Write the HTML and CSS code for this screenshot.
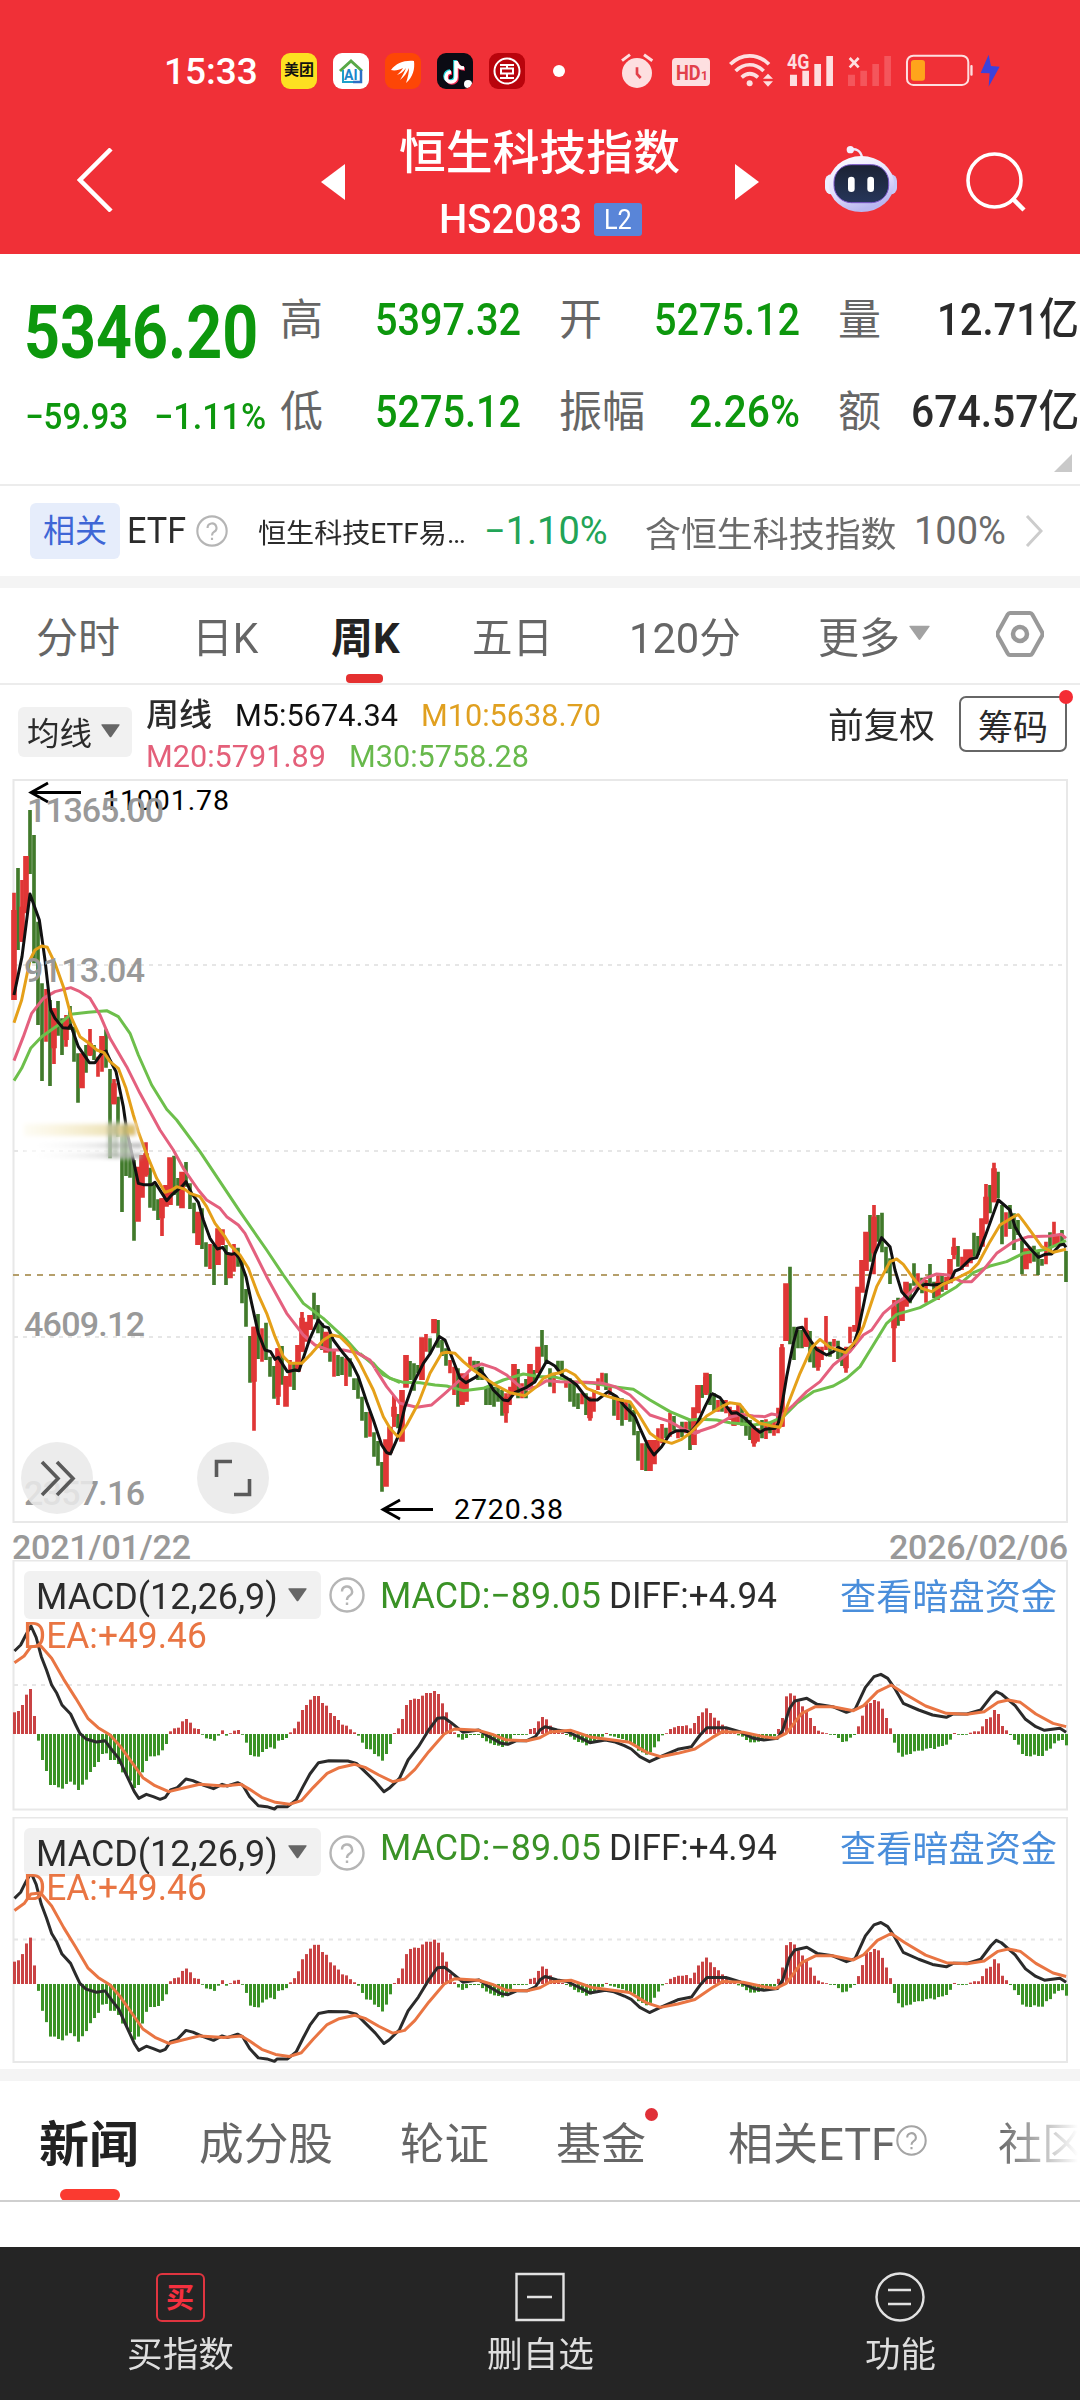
FILE: index.html
```html
<!DOCTYPE html>
<html lang="zh-CN">
<head>
<meta charset="utf-8">
<title>恒生科技指数</title>
<link rel="stylesheet" href="styles.css">
</head>
<body>
<svg class="defs" aria-hidden="true">
  <symbol id="help" viewBox="0 0 36 36"><circle cx="18" cy="18" r="16.5" fill="none" stroke="currentColor" stroke-width="2.4"/><path d="M13 14.5a5 5 0 1 1 7.5 4.3c-1.8 1.1-2.5 1.9-2.5 4.2M18 25.5v2.6" fill="none" stroke="currentColor" stroke-width="2.4"/></symbol>
  <symbol id="down" viewBox="0 0 20 14"><path d="M1 0h18q1.200 0 .5 1L11 13q-1 1.300-2 0L.5 1Q-.2 0 1 0z" fill="currentColor"/></symbol>
</svg>

<header class="header">
  <div class="status">
    <span class="time" data-w="94">15:33</span>
    <div class="apps">
      <span class="app app-mt">美团</span>
      <span class="app app-ai"><svg viewBox="0 0 36 36"><path d="M7 18 18 8l11 10" fill="none" stroke="#58a846" stroke-width="3"/><path d="M10 17v12h18" fill="none" stroke="#1c9fc9" stroke-width="2"/><path d="M28 17v12l-8 0" fill="none" stroke="#2d6fc4" stroke-width="2.500"/></svg><i>AI</i></span>
      <span class="app app-or"><svg viewBox="0 0 36 36"><path d="M6 17C11 10 20 7 29 8c1 8-1 16-8 22 2-6 3-11 3-15-2 5-5 9-9 12 3-5 5-9 6-12-3 4-6 6-9 7 3-3 5-5 6-7-4 2-8 3-12 2z" fill="#fff"/></svg></span>
      <span class="app app-tt"><svg viewBox="0 0 36 36"><g fill="none" stroke-width="3.600"><path d="M18 7v16a5 5 0 1 1-5-5M18 8c1 5 4 7 8 7" stroke="#24d9e0"/><path d="M20 9v16a5 5 0 1 1-5-5M20 9c1 5 4 7 8 7" stroke="#f8305a"/><path d="M19 8v16a5 5 0 1 1-5-5M19 8c1 5 4 7 8 7" stroke="#fff"/></g><circle cx="31" cy="31" r="4" fill="#fff"/></svg></span>
      <span class="app app-ic"><svg viewBox="0 0 36 36"><g fill="none" stroke="#fff" stroke-width="2"><circle cx="18" cy="18" r="12.500"/><path d="M11 12h14M11 25h14M12 15.500h12v5H12zM18 12v4M18 20v5"/></g></svg></span>
    </div>
    <i class="dot"></i>
    <svg class="sysicons" viewBox="60 30 1150 120">
      <g fill="#fddfe0">
        <circle cx="111" cy="99" r="45"/><path d="M66 62 90 44M132 44l25 18" stroke="#fddfe0" stroke-width="9"/>
        <rect x="216" y="54" width="114" height="84" rx="12"/>
        <circle cx="449" cy="130" r="9"/><path d="m504 101 15 15h-30zM504 140l15-16h-30z"/>
        <path d="M570 104h21v34h-21zM607 92h20v46h-20zM643 72h20v66h-20zM679 48h20v90h-20z"/>
        <rect x="1111" y="75" width="7" height="32" rx="3"/>
      </g>
      <path d="M111 82v20l11 12" fill="none" stroke="#e2404a" stroke-width="8"/>
      <g fill="none" stroke="#fddfe0" stroke-width="11"><path d="M391 73c33-34 83-34 116 0M407 93c25-25 59-25 84 0M425 112c16-14 33-14 49 0"/></g>
      <path d="M744 104h21v34h-21zM781 92h20v46h-20zM817 72h20v66h-20zM853 48h20v90h-20z" fill="#f4565c"/>
      <path d="m749 54 27 28M776 54l-27 28" stroke="#fddfe0" stroke-width="8"/>
      <rect x="921" y="47" width="184" height="88" rx="19" fill="none" stroke="#fddfe0" stroke-width="6"/>
      <rect x="933" y="60" width="42" height="62" rx="9" fill="#ffa41b"/>
      <path d="m1166 44-24 55 27 1-3 40 33-60-26-2z" fill="#3c42dc"/>
      <text x="228" y="121" class="hd" textLength="74" lengthAdjust="spacingAndGlyphs">HD</text><text x="303" y="121" class="hd1">1</text>
      <text x="561" y="88" class="g4" textLength="67" lengthAdjust="spacingAndGlyphs">4G</text>
    </svg>
  </div>
  <div class="titlebar">
    <svg class="back" viewBox="0 0 36 64"><path d="M34 1 3 32l31 31" fill="none" stroke="#fff" stroke-width="4.500"/></svg>
    <svg class="prev" viewBox="0 0 24 36"><path d="M0 18 24 0v36z" fill="#fff"/></svg>
    <div class="title">
      <h1 data-w="281">恒生科技指数</h1>
      <div class="code"><span data-w="143">HS2083</span><b data-w="28">L2</b></div>
    </div>
    <svg class="next" viewBox="0 0 24 36"><path d="M24 18 0 0v36z" fill="#fff"/></svg>
    <svg class="robot" viewBox="672 315 222 206">
      <defs><linearGradient id="rb" x2=".4" y2="1"><stop offset="0" stop-color="#fff"/><stop offset=".6" stop-color="#e4e1fc"/><stop offset="1" stop-color="#b9b6f0"/></linearGradient><linearGradient id="rf" x2="0" y2="1"><stop stop-color="#1b2233"/><stop offset="1" stop-color="#26365a"/></linearGradient></defs>
      <path d="M750 330c16-6 32 0 36 22" fill="none" stroke="#efeafd" stroke-width="7"/><circle cx="751" cy="329" r="11" fill="#f4f0ff"/>
      <rect x="675" y="403" width="40" height="60" rx="19" fill="#eef"/><rect x="851" y="403" width="40" height="60" rx="19" fill="#c6caf7"/>
      <ellipse cx="784" cy="432" rx="98" ry="84" fill="url(#rb)"/>
      <rect x="702" y="374" width="164" height="114" rx="52" fill="url(#rf)" stroke="#7a55c8" stroke-width="3"/>
      <rect x="744" y="410" width="20" height="46" rx="10" fill="#fff"/><rect x="802" y="410" width="20" height="46" rx="10" fill="#fff"/>
    </svg>
    <svg class="search" viewBox="0 0 60 60"><circle cx="28.500" cy="28.500" r="26.500" fill="none" stroke="#fff" stroke-width="3.600"/><path d="M46 46l12 12" stroke="#fff" stroke-width="4.500"/></svg>
  </div>
</header>

<section class="quote">
  <div class="last">
    <div class="price" data-w="234">5346.20</div>
    <div class="change"><span data-w="103">−59.93</span><span data-w="112">−1.11%</span></div>
  </div>
  <dl class="stats">
    <div><dt>高</dt><dd data-w="146">5397.32</dd></div>
    <div><dt>开</dt><dd data-w="146">5275.12</dd></div>
    <div class="dark"><dt>量</dt><dd data-w="142">12.71亿</dd></div>
    <div><dt>低</dt><dd data-w="146">5275.12</dd></div>
    <div><dt>振幅</dt><dd data-w="111">2.26%</dd></div>
    <div class="dark"><dt>额</dt><dd data-w="168">674.57亿</dd></div>
  </dl>
  <i class="corner"></i>
</section>

<section class="related">
  <span class="tag">相关</span>
  <span class="etf" data-w="59">ETF</span>
  <svg class="q"><use href="#help"/></svg>
  <span class="name" data-w="208">恒生科技ETF易…</span>
  <span class="pct" data-w="124">−1.10%</span>
  <span class="hold" data-w="252">含恒生科技指数</span>
  <span class="full" data-w="92">100%</span>
  <svg class="more" viewBox="0 0 18 32"><path d="M2 1l14 15L2 31" fill="none" stroke="#ccc" stroke-width="3"/></svg>
</section>

<nav class="periods">
  <a data-w="84">分时</a><a data-w="66">日K</a><a class="on" data-w="69">周K</a><a data-w="81">五日</a><a data-w="112">120分</a><a data-w="82">更多</a>
  <svg class="tri"><use href="#down"/></svg>
  <svg class="hex" viewBox="0 0 48 48"><path d="M14 3h20q1.500 0 2.300 1.500L46 22q1 2 0 4L36.300 43.500Q35.500 45 34 45H14q-1.500 0-2.300-1.500L2 26q-1-2 0-4L11.700 4.500Q12.500 3 14 3z" fill="none" stroke="#999" stroke-width="4"/><circle cx="24" cy="24" r="7" fill="none" stroke="#999" stroke-width="4.500"/></svg>
</nav>

<section class="mabar">
  <button class="drop"><span data-w="65">均线</span><svg><use href="#down"/></svg></button>
  <div class="mas">
    <p><span class="c0" data-w="66">周线</span><span class="c5" data-w="163">M5:5674.34</span><span class="c10" data-w="180">M10:5638.70</span></p>
    <p><span class="c20" data-w="180">M20:5791.89</span><span class="c30" data-w="180">M30:5758.28</span></p>
  </div>
  <span class="fq" data-w="107">前复权</span>
  <button class="chip"><span data-w="70">筹码</span></button>
</section>

<section class="kline">
<svg viewBox="0 0 1080 790">
  <rect x="13.500" y="10" width="1053.500" height="742" class="frame"/>
  <path d="M14 195H1066M14 381H1066M14 567H1066" class="grid"/>
  <path d="M13 505H1066" stroke="#b59f6b" stroke-width="2" stroke-dasharray="6 6"/>
  <g transform="scale(.33333)" fill="none">
    <g stroke="#417a2b" stroke-width="11">
      <path d="M54 294V540M90 120V312M102 195V580M114 455V765M126 640V933M150 690V948M174 693V797M186 745V855M210 708V780M222 770V875M234 850V998M258 825V908M282 825V870M318 778V893M330 897V1165M354 980V1100M366 1070V1326M378 1070V1218M390 1120V1223M402 1170V1412M450 1193V1313M462 1245V1322M474 1288V1350M522 1157V1275M534 1224V1307M558 1176V1250M570 1240V1317M582 1298V1390M606 1315V1437"/>
      <path transform="translate(0 1170)" d="M618 247V320M642 255V375M678 255V375M714 263V320M726 300V430M738 387V500M750 528V668M774 462V597M798 488V600M810 590V650M822 618V716M846 558V674M882 610V690M942 398V478M954 435V520M966 490V570M990 530V605M1014 585V648M1026 590V645M1050 595V650M1062 655V690M1074 655V716M1086 710V782M1098 756V833M1122 817V890M1134 843V917M1146 906V995"/>
      <path transform="translate(1080 1170)" d="M114 762V805M150 603V660M162 610V692M174 615V640M210 535V578M234 480V563M246 540V588M258 565V617M294 625V740M342 602V630M354 603V660M366 620V660M378 680V735M390 680V735M402 680V740M414 680V725M426 690V767M474 627V715M498 657V715M522 630V670M546 510V590M558 555V605M570 625V680M594 602V630M606 602V650M630 655V725M642 665V740M654 700V747M678 700V765M738 640V690M762 705V767M786 715V797M810 730V785M822 750V826M834 813V902M858 850V933M918 803V835M942 768V812M966 785V832M990 780V870M1026 675V713"/>
      <path transform="translate(2100 1080)" d="M6 765V803M30 732V825M42 790V845M66 810V845M126 830V887M138 860V917M150 870V930M186 870V925M210 875V910M270 410V643M282 590V690M294 600V655M306 600V655M330 603V697M342 650V713M390 635V680M414 632V687M426 655V708M510 255V395M534 255V335M546 248V367M558 350V430M570 385V462M594 503V587M630 460V520M642 400V467M666 443V490M690 402V460M702 455V505M726 430V485M774 348V410M822 308V380M834 318V375M870 165V250M894 125V205M906 225V343M930 225V297M942 250V360M954 270V315M966 330V433M1002 347V395M1014 360V435M1026 387V407M1050 307V370M1086 300V340M1098 363V456"/>
    </g>
    <g stroke="#e03636" stroke-width="11">
      <path d="M42 368V690M66 330V515M138 657V815M162 715V882M198 735V830M270 777V858M294 860V920M306 798V905M342 927V1003M438 1117V1220M486 1285V1398"/>
      <path transform="translate(0 1170)" d="M630 252V327M702 252V335M762 500V812M786 505V605M834 565V735M870 600V680M906 456V575M1002 570V650M1038 595V678M1110 756V830M1182 708V800"/>
      <path transform="translate(1080 1170)" d="M102 708V800M198 522V575M270 600V640M282 620V705M330 590V620M438 700V788M450 680V735M486 670V715M582 640V700M618 650V683M666 700V733M690 710V782M702 690V755M714 655V690M726 638V670M750 680V705M774 715V780M798 725V780M846 850V930M894 805V870M906 792V850M930 758V830M954 810V835M978 785V820"/>
      <path transform="translate(2100 1080)" d="M18 730V795M54 810V845M78 810V850M90 830V870M102 845V887M114 822V880M162 885V950M174 895V935M198 868V927M222 870V917M234 833V910M246 642V890M318 563V650M354 650V722M366 650V690M378 558V660M402 627V650M438 650V728M450 590V640M462 585V605M522 225V433M582 510V696M654 430V480M678 450V518M714 437V510M738 440V480M762 323V388M786 380V420M858 162V283M882 98V217M918 247V320M990 350V400M1038 335V403M1062 275V350M1074 315V345"/>
    </g>
    <g stroke="#e03636" stroke-width="17">
      <path d="M42 420V690M66 410V515M78 258V430M162 715V835M198 745V810M246 850V955M270 820V855M306 798V850M342 940V1003M414 1190V1355M426 1155V1283M438 1150V1215M486 1285V1345M498 1245V1310M510 1162V1305M546 1205V1315M594 1325V1425"/>
      <path transform="translate(0 1170)" d="M654 205V315M666 208V255M690 280V355M762 500V665M834 565V710M858 648V740M906 473V575M918 485V545M930 465V510M894 555V635M978 515V578M1158 838V980M1170 800V880"/>
      <path transform="translate(1080 1170)" d="M102 740V770M126 690V845M138 585V683M186 532V660M222 477V520M306 640V735M318 640V725M438 710V760M462 612V700M510 612V680M534 560V640M690 720V775M870 840V933M882 840V913M1002 742V855M1014 675V760M1038 638V700M1122 750V797M1182 815V850"/>
      <path transform="translate(2100 1080)" d="M18 740V790M162 895V940M246 652V890M258 460V633M318 600V650M354 660V712M438 660V715M474 470V605M486 390V488M498 305V423M522 260V370M582 530V595M606 510V573M618 455V530M714 455V500M750 387V460M762 350V375M798 358V410M810 358V400M846 265V350M858 200V278M882 115V217M978 355V418M1068 315V345"/>
    </g>
    <g stroke="#6dbf4b" class="ma">
      <path d="M42 932 65 895 92 835 125 800 175 765 212 733 265 727 320 722 355 740 390 790 415 855 455 945 500 1018 530 1050 600 1145 660 1235 720 1325 800 1440 850 1515 910 1600 970 1645 1035 1705 1075 1750 1120 1780 1150 1815 1200 1838"/>
      <path transform="translate(1080 1170)" d="M0 580 40 615 90 655 130 667 180 668 225 675 260 678 310 692 370 685 430 660 490 642 540 650 580 650 640 665 700 670 760 680 820 688 870 720 930 755 990 780 1020 778"/>
      <path transform="translate(2100 1080)" d="M0 868 50 870 90 878 160 885 210 878 250 860 290 820 340 785 400 768 440 745 480 710 520 645 560 580 590 553 660 533 720 500 770 470 820 428 870 408 920 395 970 370 1040 358 1098 332"/>
    </g>
    <g stroke="#e4607e" class="ma">
      <path d="M42 872 70 800 95 730 130 685 165 665 212 653 240 665 270 685 300 735 330 805 380 890 420 970 480 1080 520 1140 550 1195 595 1260 620 1290 660 1315 680 1340 715 1365 735 1390 760 1440 800 1520 860 1630 910 1695 945 1725 985 1740 1030 1740 1070 1748 1110 1770 1125 1795"/>
      <path transform="translate(1080 1170)" d="M45 625 80 680 120 730 170 742 215 735 255 700 300 660 340 620 365 612 405 625 440 645 480 680 500 688 530 680 560 662 600 665 680 667 730 670 765 680 810 705 870 765 930 785 965 805 1005 820 1020 815"/>
      <path transform="translate(2100 1080)" d="M-20 908 0 903 45 888 90 862 125 853 160 858 195 860 215 852 245 857 280 825 320 785 360 755 400 705 450 665 490 615 515 600 550 550 585 520 615 503 650 470 675 445 710 432 745 435 785 455 815 455 850 420 890 370 940 335 985 320 1050 318 1085 313 1098 325"/>
    </g>
    <g stroke="#111" class="ma">
      <path d="M42 675 66 560 90 372 118 450 135 570 152 720 165 745 188 773 205 775 212 765 235 830 268 878 285 878 305 850 318 843 330 870 348 905 370 1010 380 1080 400 1170 415 1240 430 1244 455 1244 465 1237 500 1292 515 1275 545 1250 558 1235 575 1270 595 1297 610 1350 630 1405 652 1437 668 1432 680 1450 695 1453 705 1450 718 1465 738 1520 755 1600 775 1690 795 1740 812 1745 825 1768 835 1762 862 1805 885 1800 897 1802 930 1705 955 1650 972 1670 985 1673 1000 1710 1030 1750 1055 1780 1075 1820 1100 1895 1120 1950 1145 2025 1160 2048 1172 2052"/>
      <path transform="translate(1080 1170)" d="M90 885 112 835 135 740 160 670 190 610 210 582 238 530 255 540 275 590 300 655 318 668 350 650 360 628 380 655 400 690 430 720 445 722 465 697 500 682 525 665 560 603 585 618 605 645 630 660 650 675 675 708 690 720 712 720 745 695 770 710 795 740 825 770 840 805 865 860 882 885 905 860 930 822 950 812 975 812 990 818 1010 795 1035 740 1055 700"/>
      <path transform="translate(2100 1080)" d="M35 790 60 803 95 850 110 848 135 865 165 895 180 907 195 898 225 895 235 880 245 830 260 740 280 640 292 595 307 592 330 630 350 658 380 675 400 665 415 652 437 663 460 645 475 600 500 480 525 370 545 323 570 350 585 420 605 485 630 513 655 475 675 463 700 465 725 462 750 455 765 423 780 417 810 388 830 383 855 320 895 210 930 240 945 290 965 325 990 355 1015 382 1035 373 1055 372 1080 345 1092 343 1098 352"/>
    </g>
    <g stroke="#e5a019" class="ma">
      <path d="M42 758 65 690 90 570 105 540 125 528 142 532 165 580 190 650 215 745 240 800 265 818 290 840 312 848 330 875 355 895 378 955 400 1035 415 1085 435 1140 470 1225 495 1267 515 1260 530 1250 555 1258 570 1270 600 1280 620 1310 645 1360 675 1400 690 1425 700 1435 720 1455 745 1495 775 1575 800 1630 825 1700 850 1760 870 1780 905 1780 935 1750 970 1710 995 1695 1020 1700 1050 1730 1080 1780 1120 1860 1150 1940 1170 1975 1195 2002"/>
      <path transform="translate(1080 1170)" d="M115 832 140 795 175 730 210 640 245 580 260 577 285 580 310 605 340 630 375 655 415 680 450 698 495 707 530 680 550 655 575 643 600 638 618 630 645 645 680 685 735 707 780 720 810 725 840 770 870 820 895 838 935 850 965 838 990 820 1040 768 1085 740"/>
      <path transform="translate(2100 1080)" d="M65 830 90 818 120 823 145 855 180 880 215 888 240 892 265 820 300 730 335 653 360 628 390 652 437 668 470 630 490 590 530 470 570 395 590 387 610 403 640 445 665 475 695 485 730 462 760 450 810 425 835 400 870 335 900 285 945 258 955 254 975 280 1000 315 1025 350 1060 367 1098 358"/>
    </g>
  </g>
  <defs>
    <linearGradient id="sm" x2="1" y2="0"><stop offset="0" stop-color="#fff" stop-opacity="0"/><stop offset=".6" stop-color="#ddd" stop-opacity=".7"/><stop offset="1" stop-color="#999" stop-opacity=".8"/></linearGradient>
    <linearGradient id="sy" x2="1" y2="0"><stop offset="0" stop-color="#f8efc8" stop-opacity=".2"/><stop offset=".8" stop-color="#ece0b4"/><stop offset="1" stop-color="#d8b95a"/></linearGradient>
    <filter id="soft" x="-10%" y="-60%" width="120%" height="220%"><feGaussianBlur stdDeviation="2"/></filter>
  </defs>
  <g filter="url(#soft)"><path d="M24 352h114v37H24z" fill="#fff" opacity=".65"/><path d="M24 354h112v12H24z" fill="url(#sy)"/><path d="M24 373h118v5H24zM24 383h118v5H24z" fill="url(#sm)"/><path d="M110 352v36M116 352v36M125 352v36" stroke="#52703f" stroke-width="2.500" opacity=".7"/></g>
  <g class="ext" fill="none"><path d="M81 22.500H31M48 13 31 22.500l17 9.500M433 739.500h-50M400 730l-17 9.500 17 9.500"/></g>
  <text x="103" y="40" class="ex" textLength="126">11001.78</text>
  <text x="454" y="749" class="ex" textLength="109">2720.38</text>
  <g class="axis">
    <text x="27" y="52" textLength="137">11365.00</text>
    <text x="24" y="212" textLength="121">9113.04</text>
    <text x="24" y="566" textLength="121">4609.12</text>
    <text x="24" y="735" textLength="121">2357.16</text>
    <text x="12" y="789" textLength="179">2021/01/22</text>
    <text x="889" y="789" textLength="179">2026/02/06</text>
  </g>
  <g fill="#e9e9e9" fill-opacity=".88"><circle cx="57" cy="708" r="36"/><circle cx="233" cy="708" r="36"/></g>
  <path d="m42 692 16 16.500L42 725M57 692l16 16.500L57 725M216.500 707v-15.500H232M234 724.500h15.500V709" fill="none" stroke="#5a5a5a" stroke-width="3.600"/>
</svg>
</section>

<section class="macd">
  <svg class="plot" viewBox="0 0 1080 257"><rect x="13.500" y="0.500" width="1053.500" height="249" class="frame"/><path d="M14 125H1066" class="grid"/>
    <g id="macd" transform="translate(0 174)"><g id="bars"></g>
      <g transform="scale(.34436 .33333) translate(0 -552)" class="ln">
        <path stroke="#2b2b2b" d="M42 303 60 285 75 255 90 228 105 262 120 320 135 360 150 405 165 430 180 465 205 492 220 525 232 550 250 567 280 576 305 572 325 600 345 625 365 670 390 725 403 745 425 733 445 740 465 748 480 742 495 720 515 713 540 687 560 692 590 705 620 716 645 703 660 708 690 698 705 706 725 740 750 767 775 770 797 777 805 770 835 770 860 750 880 710 900 672 925 638 955 632 1010 633 1035 640 1060 665 1090 695 1115 725 1130 715 1160 685 1185 630 1215 590 1245 540 1270 505 1290 503 1310 518 1345 547 1390 540 1420 560 1455 580 1475 583 1500 572 1530 572 1555 560 1568 540 1583 530 1618 540 1648 545 1678 560 1713 578 1758 570 1783 575 1813 587 1833 597 1858 620 1886 635 1918 620 1968 598 2008 590 2033 555 2053 533 2108 533 2148 545 2188 565 2218 570 2258 565 2273 540 2293 475 2308 453 2343 445 2373 463 2418 470 2458 487 2483 478 2513 412 2538 380 2558 373 2578 385 2598 415 2623 460 2668 480 2708 495 2748 502 2768 492 2808 492 2848 480 2878 440 2893 425 2908 432 2948 467 2978 508 3008 530 3033 541 3078 535 3096 547"/>
        <path stroke="#e97543" d="M42 338 70 318 90 290 118 287 150 325 185 388 220 445 255 505 285 533 320 555 350 590 385 640 415 683 450 707 490 725 530 715 580 703 650 708 700 703 725 718 760 742 800 757 840 763 875 752 910 712 950 670 985 653 1030 643 1060 652 1100 675 1140 695 1175 687 1205 658 1245 605 1290 552 1320 537 1390 541 1430 553 1470 570 1530 572 1568 563 1598 546 1658 541 1718 562 1758 567 1828 577 1878 607 1918 620 1968 610 2018 597 2068 563 2098 545 2158 547 2218 560 2253 565 2283 550 2328 490 2368 470 2418 470 2478 482 2508 467 2548 425 2588 405 2628 432 2688 468 2748 490 2808 493 2858 485 2898 457 2928 450 2963 457 3008 492 3058 520 3096 530"/>
      </g></g>
  </svg>
  <div class="legend">
    <div class="row"><button class="drop"><span data-w="242">MACD(12,26,9)</span><svg><use href="#down"/></svg></button><svg class="q"><use href="#help"/></svg><span class="m" data-w="221">MACD:−89.05</span><span class="d" data-w="168">DIFF:+4.94</span><a data-w="217">查看暗盘资金</a></div>
    <div class="dea" data-w="184">DEA:+49.46</div>
  </div>
</section>
<section class="macd second">
  <svg class="plot" viewBox="0 0 1080 252"><rect x="13.500" y="0.500" width="1053.500" height="244.500" class="frame"/><path d="M14 122.500H1066" class="grid"/><use href="#macd" transform="translate(0 -12.400) scale(1 1.031)"/></svg>
  <div class="legend">
    <div class="row"><button class="drop"><span data-w="242">MACD(12,26,9)</span><svg><use href="#down"/></svg></button><svg class="q"><use href="#help"/></svg><span class="m" data-w="221">MACD:−89.05</span><span class="d" data-w="168">DIFF:+4.94</span><a data-w="217">查看暗盘资金</a></div>
    <div class="dea" data-w="184">DEA:+49.46</div>
  </div>
</section>

<nav class="news">
  <a class="on" data-w="100">新闻</a><a data-w="134">成分股</a><a data-w="89">轮证</a><a class="new"><span data-w="90">基金</span></a><a data-w="168">相关ETF</a><svg class="q"><use href="#help"/></svg><a class="last-tab">社区</a>
</nav>
<div class="blank"></div>
<footer class="bottom">
  <a><i class="buy">买</i><span data-w="107">买指数</span></a>
  <a><svg viewBox="0 0 50 50"><path d="M1.500 2h47v46h-47zM12 25h25" fill="none" stroke="#e2e2e2" stroke-width="2.400"/></svg><span data-w="107">删自选</span></a>
  <a><svg viewBox="0 0 50 50"><circle cx="25" cy="25" r="23.500" fill="none" stroke="#e2e2e2" stroke-width="2.400"/><path d="M13 18h23M13 32h23" stroke="#e2e2e2" stroke-width="2.600"/></svg><span data-w="71">功能</span></a>
</footer>
<script src="chart.js"></script>
</body>
</html>
```
FILE: styles.css
```css
* { box-sizing: border-box; }
body { margin: 0; width: 1080px; height: 2400px; overflow: hidden; background: #fff; color: #2b2b2b; font-family: Roboto, "Noto Sans CJK SC", sans-serif; }
svg { display: block; flex: none; }
h1, p, dl, dd, dt { margin: 0; font-weight: 400; }
button { border: 0; padding: 0; font: inherit; color: inherit; }
.defs { position: absolute; width: 0; height: 0; }
[data-w] { flex: none; white-space: nowrap; display: block; }
.ink { display: inline-block; transform-origin: 0 50%; }

.header { height: 254px; background: #f03037; color: #fff; }
.status { display: flex; align-items: center; height: 142px; padding-left: 164px; }
.time { font-size: 37px; font-weight: 500; }
.apps { display: flex; gap: 16px; margin-left: 23px; }
.app { position: relative; width: 36px; height: 36px; border-radius: 9px; overflow: hidden; }
.app svg { width: 36px; height: 36px; }
.app-mt { background: #fde021; color: #111; font-size: 15px; font-weight: 700; line-height: 35px; text-align: center; }
.app-ai { background: #fff; }
.app-ai i { position: absolute; left: 11px; top: 14px; font: 700 14px Roboto; color: #1c86c9; }
.app-or { background: #fd4606; }
.app-tt { background: #0b0b14; }
.app-ic { background: #b9040c; }
.dot { width: 12px; height: 12px; border-radius: 50%; background: #fff; margin-left: 28px; }
.sysicons { width: 383.3px; height: 40px; margin: -2px 0 0 54.500px; }
.hd { font: 700 60px Roboto; fill: #e2404a; }
.hd1 { font: 700 36px Roboto; fill: #e2404a; }
.g4 { font: 700 58px Roboto; fill: #fddfe0; }
.titlebar { display: flex; align-items: flex-start; height: 112px; padding-left: 77px; }
.back { width: 36px; height: 64px; margin-top: 6px; }
.prev, .next { width: 24px; height: 36px; margin-top: 22px; }
.prev { margin-left: 208px; }
.title { margin-left: 54px; width: 283px; margin-top: -20px; }
.title h1 { font-size: 46.500px; line-height: 62px; font-weight: 500; }
.code { display: flex; justify-content: center; align-items: center; gap: 12px; height: 34px; margin-top: 18px; font-size: 41px; font-weight: 500; }
.code b { box-sizing: content-box; padding: 0 10px; height: 33px; line-height: 33px; background: #5985d8; border-radius: 3px; font-size: 28px; font-weight: 400; }
.next { margin-left: 53px; }
.robot { width: 74px; height: 68.700px; margin: 3px 0 0 65px; }
.search { width: 60px; height: 60px; margin: 10px 0 0 68px; }

.quote { position: relative; display: flex; height: 232px; border-bottom: 2px solid #ececec; padding-left: 24px; }
.last { width: 256px; padding-top: 49px; color: #0d970d; flex: none; }
.price { font-size: 74px; line-height: 60px; font-weight: 700; }
.change { display: flex; gap: 26px; margin: 39px 0 0 1px; font-size: 36px; line-height: 30px; font-weight: 500; }
.stats { display: grid; grid-template-columns: 241px 241px 241px; column-gap: 38px; row-gap: 46px; padding-top: 43px; align-content: start; }
.stats div { display: flex; justify-content: space-between; line-height: 46px; }
.stats dt { font-size: 43px; color: #666; }
.stats dd { font-size: 44.500px; color: #0d970d; font-weight: 500; }
.stats .dark dd { color: #2b2b2b; }
.corner { position: absolute; right: 8px; bottom: 12px; border-style: solid; border-width: 0 0 18px 18px; border-color: transparent transparent #c9c9c9; }

.related { display: flex; align-items: center; height: 90px; padding-left: 30px; }
.tag { width: 90px; height: 56px; line-height: 56px; border-radius: 6px; background: #e6edfb; color: #3e66d6; font-size: 32px; text-align: center; }
.etf { margin-left: 7px; font-size: 36px; }
.q { width: 36px; height: 36px; color: #b5b5b5; }
.related .q { width: 32px; height: 32px; margin-left: 10px; }
.related .name { margin-left: 30px; font-size: 27px; }
.related .pct { margin-left: 18px; font-size: 38px; color: #22a457; }
.related .hold { margin-left: 37px; font-size: 35.500px; color: #6b6b6b; }
.related .full { margin-left: 17px; font-size: 38px; color: #6b6b6b; }
.related .more { width: 18px; height: 32px; margin-left: 19px; }

.periods { display: flex; align-items: center; height: 109px; padding: 0 0 3px 36px; border-top: 12px solid #f4f4f4; border-bottom: 2px solid #ececec; font-size: 42px; color: #666; }
.periods a { position: relative; margin-right: 72px; }
.periods a:nth-child(2) { margin-right: 73px; }
.periods a:nth-child(4) { margin-right: 76px; }
.periods a:nth-child(5) { margin-right: 77px; }
.periods a:nth-child(6) { margin-right: 9px; }
.periods .on { color: #222; font-weight: 700; }
.periods .on::after { content: ""; position: absolute; left: 15px; bottom: -18px; width: 37px; height: 9px; border-radius: 4px; background: #e53030; }
.tri { width: 21px; height: 18px; margin-top: -2px; color: #a2a2a2; }
.hex { width: 48px; height: 48px; margin-left: 66px; }

.mabar { display: flex; height: 85px; padding-left: 18px; }
.drop { display: flex; align-items: center; background: #f1f1f1; border-radius: 6px; }
.drop svg { color: #666; }
.mabar .drop { width: 114px; height: 50px; margin-top: 22px; padding: 0 0 2px 9px; font-size: 32px; }
.mabar .drop svg { width: 19px; height: 14px; margin-left: 9px; }
.mas { width: 680px; padding: 10px 0 0 14px; }
.mas p { display: flex; gap: 23px; font-size: 32px; line-height: 41px; font-weight: 450; }
.c5 { color: #111; } .c10 { color: #e0a020; } .c20 { color: #e4607a; } .c30 { color: #68b94c; }
.fq { margin: 22px 0 0 16px; font-size: 35px; line-height: 40px; }
.chip { position: relative; display: flex; align-items: center; justify-content: center; width: 108px; height: 56px; margin: 11px 0 0 24px; border: 2px solid #666; border-radius: 7px; background: #fff; font-size: 35px; }
.chip::after { content: ""; position: absolute; right: -8px; top: -8px; width: 14px; height: 14px; border-radius: 50%; background: #f42c34; }

.kline, .kline svg { height: 790px; width: 1080px; }
.frame { fill: none; stroke: #e8e8e8; stroke-width: 2; }
.grid { stroke: #e6e6e6; stroke-width: 2; stroke-dasharray: 4 5; }
.ma path { stroke-width: 9; stroke-linejoin: round; }
.ext { stroke: #000; stroke-width: 2.800; }
.ex { font: 400 28.500px Roboto; fill: #000; }
.axis { font: 500 34px Roboto; fill: #999; }

.macd { display: grid; height: 257px; }
.macd > * { grid-area: 1 / 1; }
.macd .plot { width: 1080px; height: 257px; }
.macd.second, .macd.second .plot { height: 252px; }
.ln path { fill: none; stroke-width: 3; vector-effect: non-scaling-stroke; stroke-linejoin: round; }
.up { fill: #c94344; } .dn { fill: #3a9226; }
.legend { padding: 11px 0 0 24px; font-size: 36.500px; }
.row { display: flex; height: 48px; align-items: center; }
.row .drop { width: 297px; height: 48px; padding-left: 12px; }
.row .drop span { margin-top: 1px; }
.row .drop svg { width: 19px; height: 14px; margin-left: 10px; }
.row .q { margin-left: 8px; }
.row .m { margin: 1px 0 0 15px; color: #3a9226; }
.row .d { margin: 1px 0 0 8px; }
.row a { margin: -2px 0 0 63px; color: #4a8edb; font-size: 36px; }
.dea { color: #e97543; line-height: 36px; margin: -1px 0 0 -1px; }
.second .row > :not(.drop) { position: relative; top: -5px; }
.second .row .q { top: 1px; }
.second .dea { margin-top: -6px; }

.news { position: relative; display: flex; align-items: center; height: 133px; padding: 0 0 0 39px; border-top: 12px solid #f4f4f4; border-bottom: 2px solid #cfcfcf; font-size: 44px; color: #666; overflow: hidden; }
.news a { position: relative; margin-right: 67px; }
.news .on { color: #222; font-weight: 700; margin-right: 60px; font-size: 49px; }
.news .on::after { content: ""; position: absolute; left: 21px; bottom: -25px; width: 60px; height: 12px; border-radius: 6px; background: #fb3a30; }
.news a.new { margin-right: 82px; }
.new::after { content: ""; position: absolute; right: -12px; top: -1px; width: 13px; height: 13px; border-radius: 50%; background: #e03038; }
.news a:nth-child(5) { margin-right: 0; }
.news .q { width: 31px; height: 31px; color: #a5a5a5; }
.news .last-tab { margin: 0 -20px 0 71px; white-space: nowrap; background: linear-gradient(90deg, #666, #fff 80px); -webkit-background-clip: text; color: transparent; }
.blank { height: 45px; }
.bottom { display: grid; grid-template-columns: repeat(3, 1fr); height: 153px; background: #252525; color: #dedede; font-size: 35px; }
.bottom a { display: flex; flex-direction: column; align-items: center; padding-top: 25px; gap: 12px; line-height: 44px; }
.bottom svg { width: 50px; height: 50px; }
.buy { width: 49px; height: 49px; margin: 1px 0 0; border: 2.500px solid #e03540; border-radius: 6px; font: 700 28px/43px "Noto Sans CJK SC"; text-align: center; color: #f5303f; }
```
FILE: chart.js
```js
// Stretch each fixed-width label so its glyphs fill the width given in data-w.
document.querySelectorAll('[data-w]').forEach(function (el) {
  var w = +el.dataset.w, ink = document.createElement('span');
  ink.className = 'ink';
  ink.textContent = el.textContent;
  el.textContent = '';
  el.appendChild(ink);
  ink.style.transform = 'scaleX(' + w / ink.offsetWidth + ')';
  el.style.width = w + 'px';
});

// MACD histogram, one value per week.
var hist = [65,69,87,118,135,54,-20,-78,-111,-153,-153,-160,-164,-150,-143,-152,-168,-152,-137,-114,-99,-84,-60,-58,-78,-78,-90,-115,-125,-140,-162,-153,-115,-81,-67,-67,-64,-49,-30,8,17,19,38,45,34,17,15,-2,-13,-15,-20,-5,11,-5,2,10,12,-2,-26,-63,-67,-68,-54,-45,-40,-44,-20,-18,-12,5,17,37,72,87,103,114,114,93,85,63,54,42,28,25,14,5,-5,-26,-45,-46,-60,-67,-80,-60,-30,3,17,45,87,102,106,105,115,123,123,129,120,92,65,30,5,-10,-17,-12,-3,-3,-3,-12,-22,-28,-33,-35,-39,-34,-22,-3,-3,-3,-2,15,18,38,51,44,25,12,5,3,-3,-8,-17,-24,-26,-34,-30,-22,-16,-8,3,-5,-8,-12,-15,-20,-24,-30,-50,-55,-62,-55,-40,-22,-4,2,15,20,24,24,26,17,33,54,65,77,63,49,40,28,18,8,4,-4,-8,-18,-25,-25,-23,-20,-16,-12,-7,15,48,113,122,115,98,83,72,48,24,10,5,2,-2,-3,-12,-24,-22,-11,-3,23,55,92,93,102,98,76,48,17,-26,-56,-68,-62,-60,-52,-50,-50,-44,-42,-45,-38,-36,-32,-17,3,-2,-3,-2,4,8,8,23,45,50,72,60,24,11,-3,-18,-32,-60,-66,-67,-62,-66,-66,-50,-44,-28,-20,-18,-34];
var bars = document.getElementById('bars');
hist.forEach(function (v, i) {
  var r = document.createElementNS('http://www.w3.org/2000/svg', 'rect');
  var h = Math.max(Math.abs(v) / 3, 0.8);
  r.setAttribute('x', 13 + i * 4);
  r.setAttribute('y', v > 0 ? -h : 0);
  r.setAttribute('width', 3);
  r.setAttribute('height', h);
  r.setAttribute('class', v > 0 ? 'up' : 'dn');
  bars.appendChild(r);
});
```
